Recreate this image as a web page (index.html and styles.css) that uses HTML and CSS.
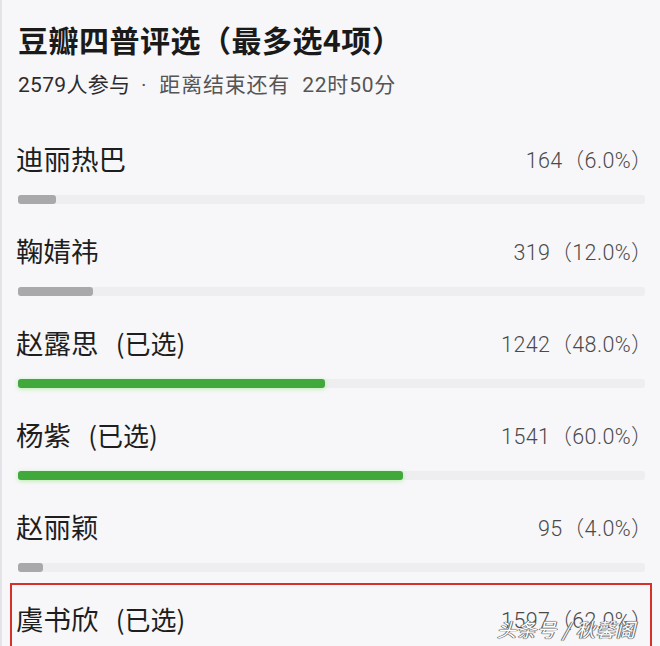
FILE: index.html
```html
<!DOCTYPE html>
<html lang="zh-CN">
<head>
  <meta charset="UTF-8" />
  <meta name="viewport" content="width=device-width, initial-scale=1.0"/>
  <title>豆瓣四普评选</title>
  <link rel="stylesheet" href="styles.css">
</head>
<body>
  <div class="poll">
    <h1 class="poll-title">豆瓣四普评选（最多选4项）</h1>
    <div class="poll-meta">
      <span class="count">2579人参与</span>
      <span class="deadline">· 距离结束还有 22时50分</span>
    </div>

    <!-- Options -->
    <div class="options">
      <div class="option">
        <div class="option-head">
          <span class="name">迪丽热巴</span>
          <span class="votes">164（6.0%）</span>
        </div>
        <div class="track"><div class="bar" style="width: 6%"></div></div>
      </div>

      <div class="option">
        <div class="option-head">
          <span class="name">鞠婧祎</span>
          <span class="votes">319（12.0%）</span>
        </div>
        <div class="track"><div class="bar" style="width: 12%"></div></div>
      </div>

      <div class="option picked">
        <div class="option-head">
          <span class="name">赵露思 <span class="tag">(已选)</span></span>
          <span class="votes">1242（48.0%）</span>
        </div>
        <div class="track"><div class="bar" style="width: 49%"></div></div>
      </div>

      <div class="option picked">
        <div class="option-head">
          <span class="name">杨紫 <span class="tag">(已选)</span></span>
          <span class="votes">1541（60.0%）</span>
        </div>
        <div class="track"><div class="bar" style="width: 61.4%"></div></div>
      </div>

      <div class="option">
        <div class="option-head">
          <span class="name">赵丽颖</span>
          <span class="votes">95（4.0%）</span>
        </div>
        <div class="track"><div class="bar" style="width: 4%"></div></div>
      </div>

      <div class="option picked marked">
        <div class="option-head">
          <span class="name">虞书欣 <span class="tag">(已选)</span></span>
          <span class="votes">1597（62.0%）</span>
        </div>
        <span class="watermark">头条号 / 秋馨阁</span>
      </div>
    </div>
  </div>
</body>
</html>
```

FILE: styles.css
```css
body {
  margin: 0;
  background: #f7f7f9;
  font-family: "Noto Sans CJK SC", "Noto Sans", sans-serif;
  color: #1c1c1e;
  height: 646px;
  overflow: hidden;
}

.poll {
  height: 646px;
  padding: 0 10px 0 16px;
  border-left: 2px solid #e4e4e8;
  box-sizing: border-box;
  overflow: hidden;
}

.poll-title {
  margin: 0;
  padding-top: 19px;
  font-size: 30px;
  line-height: 40px;
  font-weight: bold;
  color: #1a1a1a;
  letter-spacing: 0.5px;
}

.poll-meta {
  margin-top: 4px;
  font-size: 21px;
  line-height: 40px;
  color: #2c2c2e;
  word-spacing: 6px;
}

.poll-meta .count {
  font-family: Roboto, "Noto Sans CJK SC", sans-serif;
  letter-spacing: 0.3px;
}

.poll-meta .deadline {
  font-family: Roboto, "Noto Sans CJK SC", sans-serif;
  color: #555;
  letter-spacing: 0.8px;
}

/* Option rows */
.options {
  margin-top: 33px;
}

.option {
  position: relative;
  margin-bottom: 26px;
}

.option-head {
  display: flex;
  justify-content: space-between;
  align-items: center;
  height: 40px;
}

.name {
  font-size: 27.5px;
  line-height: 40px;
  color: #1e1e1e;
  margin-left: -2px;
  white-space: pre;
}

.tag {
  font-size: 26px;
  margin-left: 11px;
}

.votes {
  font-family: Roboto, "Noto Sans CJK SC", sans-serif;
  font-weight: 300;
  font-size: 21.5px;
  color: #4a4a4a;
  letter-spacing: 0.4px;
  margin-right: -3px;
}

.track {
  margin-top: 17px;
  margin-right: 5px;
  height: 9px;
  background: #eeeef1;
  border-radius: 3px;
}

.bar {
  height: 100%;
  background: #a9a9ac;
  border-radius: 3px;
}

.picked .bar {
  background: #41a83c;
  box-shadow: 0 1px 4px rgba(120, 230, 90, 0.5);
}

/* highlighted last row */
.marked {
  margin: -15px -2px 0 -8px;
  padding: 13px 0 0 6px;
  border: 2px solid #d6302b;
  border-bottom: none;
  height: 60px;
}

.watermark {
  position: absolute;
  right: 14px;
  top: 30px;
  font-size: 19px;
  font-style: italic;
  color: #fff;
  text-shadow: 0 0 1px #555, 0 0 1px #555, 1px 0 0 #777, -1px 0 0 #777;
  letter-spacing: 1px;
}
```
